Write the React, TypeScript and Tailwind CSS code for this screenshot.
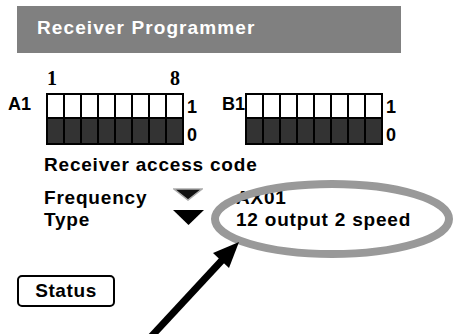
import React from 'react';

const Dip = () => (
  <div className="flex h-[52px] w-[138px] gap-[2px] border-2 border-black bg-black">
    {Array.from({ length: 8 }).map((_, i) => (
      <div key={i} className="flex flex-1 flex-col">
        <div className="h-[22px] bg-white" />
        <div className="flex-1 border-t-2 border-black bg-[#333]" />
      </div>
    ))}
  </div>
);

const Bits = () => (
  <div className="ml-[3px] flex w-[10px] flex-col gap-[10px] pt-[5px] text-[18px] font-bold leading-none">
    <span>1</span>
    <span>0</span>
  </div>
);

export default function App() {
  return (
    <div className="relative h-[334px] w-[453px] overflow-hidden bg-white text-black" style={{ fontFamily: '"Liberation Sans", Arial, sans-serif' }}>
      <div className="ml-[17px] mt-[6px] flex h-[47px] w-[384px] items-center bg-[#808080] pb-[2px] pl-[20px] text-[19px] font-bold tracking-[1.1px] text-white">
        Receiver Programmer
      </div>

      <div className="relative ml-[47px] mt-[15px] h-[25px] text-[20px] font-bold leading-none" style={{ fontFamily: '"Liberation Serif", serif' }}>
        <span className="absolute left-0 top-0">1</span>
        <span className="absolute left-[123px] top-0">8</span>
      </div>

      <div className="flex items-start">
        <span className="ml-[8px] mt-[2px] w-[38px] text-[18px] font-bold leading-none">A1</span>
        <Dip />
        <Bits />
        <span className="ml-[25px] mt-[2px] w-[23px] text-[18px] font-bold leading-none">B1</span>
        <Dip />
        <Bits />
      </div>

      <div className="ml-[44px] mt-[10px] text-[19px] font-bold leading-[20px] tracking-[0.8px]">Receiver access code</div>

      <div className="ml-[44px] mt-[12px] grid grid-cols-[129px_63px_auto] text-[19px] font-bold leading-[22px] tracking-[0.8px]">
        <span>Frequency</span>
        <span className="flex items-start pt-[1px]">
          <svg width="30" height="13" viewBox="0 0 30 13">
            <polygon points="1,1 29,1 15,12" fill="#111" stroke="#aaa" strokeWidth="1.5" />
          </svg>
        </span>
        <span>AX01</span>
        <span>Type</span>
        <span className="flex items-start pt-[1px]">
          <svg width="31" height="15" viewBox="0 0 31 15">
            <polygon points="0,0 31,0 15.5,15" fill="#000" />
          </svg>
        </span>
        <span>12 output 2 speed</span>
      </div>

      <button className="ml-[17px] mt-[44px] flex h-[32px] w-[98px] items-center justify-center rounded-[5px] border-2 border-black text-[19px] font-bold tracking-[0.6px]">
        Status
      </button>

      <svg className="pointer-events-none absolute left-0 top-0" width="453" height="334" viewBox="0 0 453 334">
        <ellipse cx="332" cy="219" rx="117" ry="35" fill="none" stroke="#999" strokeWidth="8" />
        <line x1="148" y1="340" x2="225" y2="257" stroke="#000" strokeWidth="7" />
        <polygon points="239,242 213,253 229,268" fill="#000" />
      </svg>
    </div>
  );
}
